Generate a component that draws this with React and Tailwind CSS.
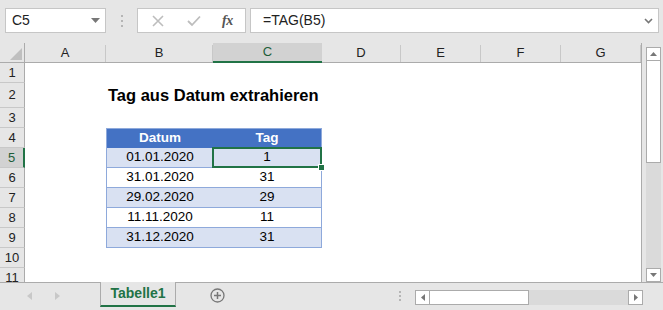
import React from "react";

const cols = [
  { l: "A", w: "w-[81px]" },
  { l: "B", w: "w-[107px]" },
  { l: "C", w: "w-[109px]" },
  { l: "D", w: "w-[79px]" },
  { l: "E", w: "w-[80px]" },
  { l: "F", w: "w-[80px]" },
  { l: "G", w: "w-[80px]" },
];

const rows = [
  { n: 1, h: "h-[20px]" },
  { n: 2, h: "h-[25px]" },
  { n: 3, h: "h-[20px]" },
  { n: 4, h: "h-[20px]" },
  { n: 5, h: "h-[20px]" },
  { n: 6, h: "h-[20px]" },
  { n: 7, h: "h-[20px]" },
  { n: 8, h: "h-[20px]" },
  { n: 9, h: "h-[20px]" },
  { n: 10, h: "h-[20px]" },
  { n: 11, h: "h-[20px]" },
];

const data = {
  5: ["01.01.2020", "1"],
  6: ["31.01.2020", "31"],
  7: ["29.02.2020", "29"],
  8: ["11.11.2020", "11"],
  9: ["31.12.2020", "31"],
};

function Cells({ n }) {
  const rest = (
    <>
      <div className="w-[79px]" />
      <div className="w-[80px]" />
      <div className="w-[80px]" />
      <div className="w-[80px]" />
    </>
  );
  if (n === 2) {
    return (
      <>
        <div className="w-[81px]" />
        <div className="w-[107px] relative">
          <div className="absolute left-[2px] top-0 h-full flex items-center whitespace-nowrap text-[16.5px] font-bold text-black">
            Tag aus Datum extrahieren
          </div>
        </div>
        <div className="w-[109px]" />
        {rest}
      </>
    );
  }
  if (n === 4) {
    return (
      <>
        <div className="w-[81px]" />
        <div className="w-[1px]" />
        <div className="w-[107px] -ml-[1px] bg-[#4472c4] border-l border-t border-[#8ea9db] text-white font-bold text-[13.5px] flex items-center justify-center">
          Datum
        </div>
        <div className="w-[109px] bg-[#4472c4] border-r border-t border-[#8ea9db] text-white font-bold text-[13.5px] flex items-center justify-center">
          Tag
        </div>
        {rest}
      </>
    );
  }
  if (data[n]) {
    const band = n % 2 === 1 ? "bg-[#d9e1f2]" : "bg-white";
    return (
      <>
        <div className="w-[81px]" />
        <div className="w-[1px]" />
        <div className={`w-[107px] -ml-[1px] ${band} border-l border-b border-[#8ea9db] text-[13.5px] text-black flex items-center justify-center`}>
          {data[n][0]}
        </div>
        <div className={`w-[109px] ${band} border-r border-b border-[#8ea9db] text-[13.5px] text-black flex items-center justify-center relative ${n === 5 ? "z-10" : ""}`}>
          {data[n][1]}
          {n === 5 && (
            <div className="absolute -left-[1px] -top-[1px] w-[110px] h-[21px] border-2 border-[#217346] z-10">
              <div className="absolute -right-[5px] -bottom-[5px] w-[7px] h-[7px] bg-[#217346] border border-white" />
            </div>
          )}
        </div>
        {rest}
      </>
    );
  }
  return null;
}

export default function App() {
  return (
    <div className="w-[663px] h-[310px] bg-[#e6e6e6] overflow-hidden flex flex-col font-['Liberation_Sans',Arial,sans-serif] text-[#222]">
      {/* Formula bar */}
      <div className="h-[43px] flex items-start pt-[8px] shrink-0">
        <div className="ml-[5px] w-[101px] h-[25px] bg-white border border-[#c6c6c6] flex items-center justify-between pl-[6px] pr-[5px]">
          <span className="text-[14px] text-[#222]">C5</span>
          <svg width="9" height="5" viewBox="0 0 9 5">
            <path d="M0 0 L9 0 L4.5 5 Z" fill="#777" />
          </svg>
        </div>
        <div className="w-[31px] h-[25px] flex flex-col items-center justify-center gap-[3px]">
          <div className="w-[2px] h-[2px] bg-[#b5b5b5]" />
          <div className="w-[2px] h-[2px] bg-[#b5b5b5]" />
          <div className="w-[2px] h-[2px] bg-[#b5b5b5]" />
        </div>
        <div className="w-[109px] h-[25px] bg-white border border-[#c6c6c6] flex items-center">
          <svg className="ml-[14px]" width="12" height="12" viewBox="0 0 12 12">
            <path d="M1 1 L11 11 M11 1 L1 11" stroke="#bdbdbd" strokeWidth="1.6" />
          </svg>
          <svg className="ml-[23px]" width="14" height="12" viewBox="0 0 14 12">
            <path d="M1 6 L5 10 L13 1.5" stroke="#bdbdbd" strokeWidth="1.8" fill="none" />
          </svg>
          <span className="ml-[21px] text-[14px] italic text-[#555] font-['Liberation_Serif',serif] font-bold tracking-[-0.5px]">
            fx
          </span>
        </div>
        <div className="ml-[4px] w-[409px] h-[25px] bg-white border border-[#c6c6c6] flex items-center justify-between pl-[12px] pr-[5px]">
          <span className="text-[14px] text-[#222]">=TAG(B5)</span>
          <svg width="9" height="6" viewBox="0 0 9 6">
            <path d="M1 1 L4.5 4.5 L8 1" stroke="#777" strokeWidth="1.6" fill="none" />
          </svg>
        </div>
      </div>

      {/* Grid + vertical scrollbar */}
      <div className="h-[239px] flex shrink-0">
        <div className="w-[642px] border-r border-[#ababab] bg-white flex flex-col overflow-hidden">
          {/* column headers */}
          <div className="h-[20px] flex shrink-0 bg-[#e6e6e6] border-b border-[#ababab]">
            <div className="w-[25px] relative border-r border-[#ababab]">
              <svg className="absolute left-[10px] top-[5px]" width="12" height="12" viewBox="0 0 12 12">
                <path d="M12 0 L12 12 L0 12 Z" fill="#bfbfbf" />
              </svg>
            </div>
            {cols.map((c) =>
              c.l === "C" ? (
                <div
                  key={c.l}
                  className={`${c.w} bg-[#d2d2d2] border-b-2 border-[#217346] -mb-[1px] flex items-center justify-center text-[13px] text-[#1e5e3a]`}
                >
                  {c.l}
                </div>
              ) : (
                <div key={c.l} className={`${c.w} flex items-end`}>
                  <div className="flex-1 h-full flex items-center justify-center text-[13px] text-[#222]">{c.l}</div>
                  <div className="w-[1px] h-[17px] bg-[#c8c8c8]" />
                </div>
              )
            )}
          </div>
          {rows.map((r) => (
            <div key={r.n} className={`${r.h} flex shrink-0`}>
              <div
                className={
                  r.n === 5
                    ? "w-[25px] shrink-0 bg-[#d2d2d2] border-r-2 border-[#217346] border-b border-b-[#c8c8c8] flex items-center justify-center text-[13px] text-[#1e5e3a]"
                    : "w-[25px] shrink-0 bg-[#e6e6e6] border-r border-[#ababab] border-b border-b-[#c8c8c8] flex items-center justify-center text-[13px] text-[#222]"
                }
              >
                {r.n}
              </div>
              <Cells n={r.n} />
            </div>
          ))}
        </div>
        {/* vertical scrollbar */}
        <div className="ml-[4px] w-[15px] pt-[4px] flex flex-col bg-[#e6e6e6]">
          <div className="h-[14px] bg-white border border-[#ababab] flex items-center justify-center">
            <svg width="7" height="4" viewBox="0 0 7 4">
              <path d="M0 4 L7 4 L3.5 0 Z" fill="#777" />
            </svg>
          </div>
          <div className="flex-1 bg-[#dadada] flex flex-col">
            <div className="h-[102px] bg-white border border-[#ababab] border-t-0" />
            <div className="flex-1" />
          </div>
          <div className="h-[14px] bg-white border border-[#ababab] flex items-center justify-center">
            <svg width="7" height="4" viewBox="0 0 7 4">
              <path d="M0 0 L7 0 L3.5 4 Z" fill="#777" />
            </svg>
          </div>
        </div>
      </div>

      {/* Sheet tabs bar */}
      <div className="flex-1 border-t border-[#ababab] flex items-start">
        <div className="w-[100px] h-[25px] flex items-center">
          <svg className="ml-[27px]" width="5" height="8" viewBox="0 0 5 8">
            <path d="M5 0 L5 8 L0 4 Z" fill="#c8c8c8" />
          </svg>
          <svg className="ml-[23px]" width="5" height="8" viewBox="0 0 5 8">
            <path d="M0 0 L0 8 L5 4 Z" fill="#c8c8c8" />
          </svg>
        </div>
        <div className="w-[76px] h-[25px] -mt-[1px] bg-[#e6e6e6] border-l border-r border-[#ababab] border-b-2 border-b-[#217346] flex items-center justify-center text-[14px] font-bold text-[#217346]">
          Tabelle1
        </div>
        <div className="w-[84px] h-[25px] flex items-center pl-[34px]">
          <svg width="15" height="15" viewBox="0 0 15 15">
            <circle cx="7.5" cy="7.5" r="6.5" stroke="#777" strokeWidth="1.3" fill="none" />
            <path d="M7.5 4 L7.5 11 M4 7.5 L11 7.5" stroke="#777" strokeWidth="1.5" />
          </svg>
        </div>
        <div className="w-[155px] h-[25px] flex flex-col items-end justify-center gap-[2px] pr-[14px]">
          <div className="w-[2px] h-[2px] bg-[#b5b5b5]" />
          <div className="w-[2px] h-[2px] bg-[#b5b5b5]" />
          <div className="w-[2px] h-[2px] bg-[#b5b5b5]" />
        </div>
        <div className="mt-[7px] w-[228px] h-[15px] flex bg-[#dadada]">
          <div className="w-[15px] h-[15px] bg-white border border-[#ababab] flex items-center justify-center">
            <svg width="4" height="7" viewBox="0 0 4 7">
              <path d="M4 0 L4 7 L0 3.5 Z" fill="#777" />
            </svg>
          </div>
          <div className="w-[99px] h-[15px] bg-white border border-[#ababab] border-l-0" />
          <div className="flex-1" />
          <div className="w-[15px] h-[15px] bg-white border border-[#ababab] flex items-center justify-center">
            <svg width="4" height="7" viewBox="0 0 4 7">
              <path d="M0 0 L0 7 L4 3.5 Z" fill="#777" />
            </svg>
          </div>
        </div>
      </div>
    </div>
  );
}
